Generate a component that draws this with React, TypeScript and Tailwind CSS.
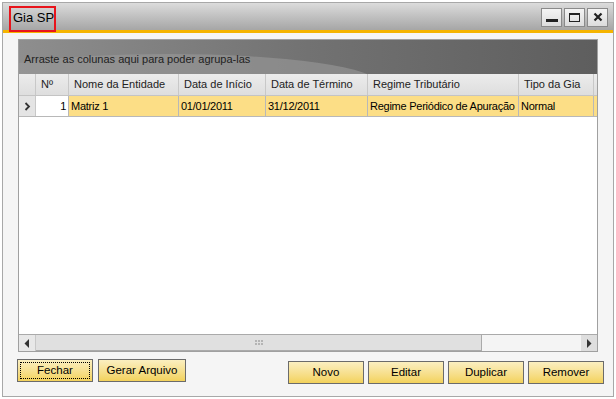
import { ReactNode } from "react";

const font = { fontFamily: '"Liberation Sans", Arial, sans-serif' };

type Col = { label: string; width: string; value: string; align?: string; white?: boolean };

const columns: Col[] = [
  { label: "Nº", width: "w-[33px]", value: "1", align: "text-right", white: true },
  { label: "Nome da Entidade", width: "w-[110px]", value: "Matriz 1" },
  { label: "Data de Início", width: "w-[87px]", value: "01/01/2011" },
  { label: "Data de Término", width: "w-[102px]", value: "31/12/2011" },
  { label: "Regime Tributário", width: "w-[151px]", value: "Regime Periódico de Apuração" },
  { label: "Tipo da Gia", width: "w-[75px]", value: "Normal" },
];

function WinButton({ children }: { children: ReactNode }) {
  return (
    <div className="w-[21px] h-[19px] border border-[#8a8a8a] bg-gradient-to-b from-[#f4f4f4] to-[#dcdcdc] flex items-center justify-center">
      {children}
    </div>
  );
}

function ActionButton({ label, width, focused }: { label: string; width: string; focused?: boolean }) {
  return (
    <button
      className={`${width} h-[23px] border border-[#6b6b6b] bg-gradient-to-b from-[#fbefc0] to-[#f3d25a] text-[11.5px] text-black flex items-center justify-center p-[2px]`}
    >
      <span
        className={`w-full h-full flex items-center justify-center ${
          focused ? "border border-dotted border-black" : "border border-transparent"
        }`}
      >
        {label}
      </span>
    </button>
  );
}

export default function App() {
  return (
    <div className="w-[616px] h-[399px] bg-white overflow-hidden relative" style={font}>
      <div className="ml-[2px] mt-[2px] w-[612px] h-[395px] border border-[#a8a8a8] bg-[#f5f5f5] flex flex-col">
        {/* Title bar */}
        <div className="h-[27px] bg-gradient-to-b from-[#dcdcdc] to-[#a6a6a6] flex items-center justify-between pl-[10px] pr-[5px]">
          <span className="text-[13px] text-black leading-none pt-[1px]">Gia SP</span>
          <div className="flex gap-[2px] pt-[1px]">
            <WinButton>
              <div className="w-[12px] h-[3px] bg-[#222] mt-[7px]" />
            </WinButton>
            <WinButton>
              <div className="w-[11px] h-[9px] border border-[#222] border-t-2" />
            </WinButton>
            <WinButton>
              <svg width="10" height="10" viewBox="0 0 10 10">
                <path d="M1.5 1.5 L8.5 8.5 M8.5 1.5 L1.5 8.5" stroke="#222" strokeWidth="2.2" />
              </svg>
            </WinButton>
          </div>
        </div>
        <div className="h-[3px] bg-[#f5b400]" />

        {/* Body */}
        <div className="pl-[15px] pt-[6px]">
          <div className="w-[580px] h-[313px] border border-[#a0a0a0] bg-white flex flex-col">
            {/* Group panel */}
            <div className="h-[34px] bg-gradient-to-r from-[#8e8e8e] via-[#727272] to-[#5e5e5e] relative overflow-hidden flex items-end pb-[7px] pl-[5px]">
              <div className="absolute left-[-60px] top-[14px] w-[420px] h-[60px] rounded-[50%] bg-[#9a9a9a] opacity-60" />
              <span className="relative text-[11px] text-[#222]">Arraste as colunas aqui para poder agrupa-las</span>
            </div>

            {/* Header row */}
            <div className="h-[22px] flex bg-gradient-to-b from-[#ececec] to-[#dedede] border-b border-[#c4c4c4]">
              <div className="w-[17px] border-r border-[#c8c8c8]" />
              {columns.map((c) => (
                <div
                  key={c.label}
                  className={`${c.width} border-r border-[#c8c8c8] flex items-center pl-[5px] text-[11px] text-[#222] whitespace-nowrap`}
                >
                  {c.label}
                </div>
              ))}
              <div className="flex-1" />
            </div>

            {/* Data row */}
            <div className="h-[21px] flex border-b border-[#b8b8b8]">
              <div className="w-[17px] bg-[#e4e4e4] border-r border-[#c8c8c8] flex items-center justify-center">
                <svg width="7" height="9" viewBox="0 0 7 9">
                  <path d="M1.5 1 L5 4.5 L1.5 8" stroke="#333" strokeWidth="1.8" fill="none" />
                </svg>
              </div>
              {columns.map((c) => (
                <div
                  key={c.label}
                  className={`${c.width} ${c.white ? "bg-white pr-[2px]" : "bg-[#fcde86] pl-[2px]"} ${c.align ?? ""} border-r border-[#b8b8b8] flex items-center ${c.align ? "justify-end" : ""} text-[11px] tracking-[-0.25px] text-black whitespace-nowrap overflow-hidden`}
                >
                  {c.value}
                </div>
              ))}
              <div className="flex-1 bg-[#fcde86]" />
            </div>

            <div className="flex-1" />

            {/* Horizontal scrollbar */}
            <div className="h-[17px] flex border-t border-[#aaaaaa] bg-[#f4f4f4]">
              <div className="w-[17px] bg-[#e8e8e8] border-r border-[#c8c8c8] flex items-center justify-center">
                <svg width="6" height="9" viewBox="0 0 6 9">
                  <path d="M5 0 L0.5 4.5 L5 9 Z" fill="#333" />
                </svg>
              </div>
              <div className="w-[446px] bg-[#e0e0e0] border-r border-b border-[#aaaaaa] flex items-center justify-center">
                <div className="grid grid-cols-3 gap-[1px]">
                  {Array.from({ length: 6 }).map((_, i) => (
                    <div key={i} className="w-[2px] h-[2px] bg-[#b4b4b4]" />
                  ))}
                </div>
              </div>
              <div className="flex-1" />
              <div className="w-[16px] bg-[#dedede] flex items-center justify-center">
                <svg width="6" height="9" viewBox="0 0 6 9">
                  <path d="M1 0 L5.5 4.5 L1 9 Z" fill="#333" />
                </svg>
              </div>
            </div>
          </div>
        </div>

        {/* Buttons */}
        <div className="flex items-start pl-[14px] pr-[9px] mt-[7px]">
          <div className="flex gap-[5px]">
            <ActionButton label="Fechar" width="w-[76px]" focused />
            <ActionButton label="Gerar Arquivo" width="w-[88px]" />
          </div>
          <div className="flex-1" />
          <div className="flex gap-[4px] mt-[2px]">
            <ActionButton label="Novo" width="w-[76px]" />
            <ActionButton label="Editar" width="w-[76px]" />
            <ActionButton label="Duplicar" width="w-[76px]" />
            <ActionButton label="Remover" width="w-[76px]" />
          </div>
        </div>
      </div>

      {/* Red annotation box */}
      <div className="absolute left-[9px] top-[6px] w-[47px] h-[26px] border-2 border-[#e8141c]" />
    </div>
  );
}
